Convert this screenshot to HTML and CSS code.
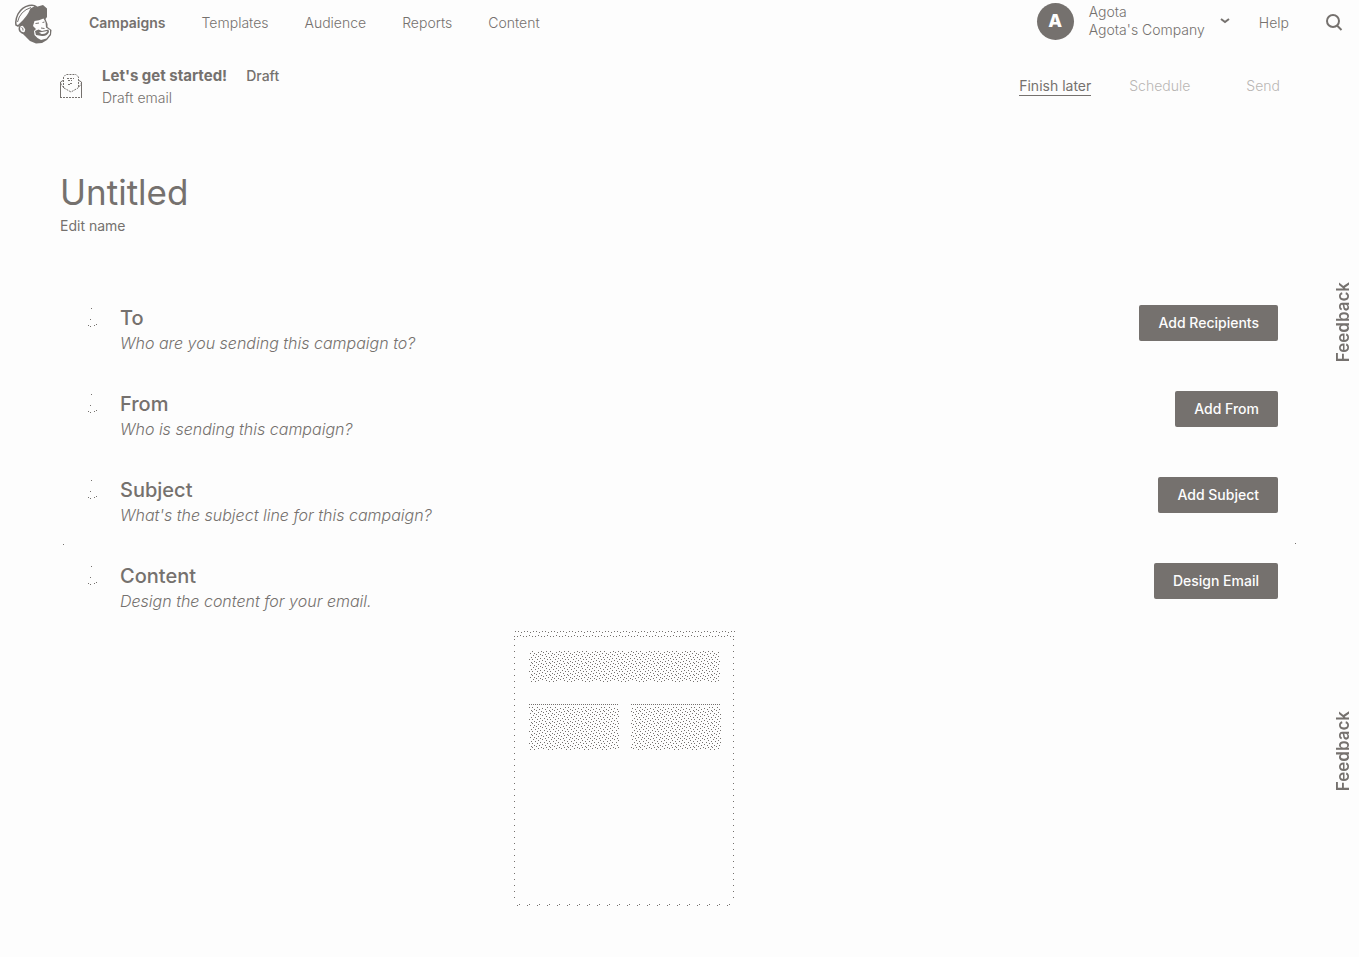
FILE: index.html
```html
<!DOCTYPE html>
<html lang="en">
<head>
<meta charset="utf-8">
<title>Untitled campaign</title>
<link rel="stylesheet" href="styles.css">
</head>
<body>
<header class="topbar">
  <a class="logo" href="#" aria-label="Home">
    <svg viewBox="15 4 38 40" width="38" height="40" aria-hidden="true">
      <path class="ink" d="M19 24 L26 18 L31 9 L36 7 L43 5 L47 8.500 L47 17 L45.500 19 L47.500 24 L47.500 27 L51.500 30 L51 35 L47 40 L42 43 L36 43.500 L30 41 L25 36 L22 33 Z"/>
      <path class="cap" d="M16 25 Q15 20 18 14 Q22 7 29 5.500 Q34 4.500 36 6.500 L31 9 Q28 17 20 24 L18 26 Z"/>
      <path class="line" d="M17.500 22 Q20 11 31 7.500"/>
      <path class="ear" d="M20 26 Q23 23.500 24.500 27 Q27 29 25.500 31.500 Q24.500 34 21.500 32.500 Q18 30 20 26 Z"/>
      <path class="line" d="M21.500 27.500 Q23.500 28 23 30.500"/>
      <path class="paper" d="M34.500 21 Q39 20.500 43.500 18.500 L45.500 22 L46 27.500 L50 30 L50 34 L46.500 38.500 L41 40 L37.500 38 L34.500 35 L34 31 L36 29 L33 26 Z"/>
      <path class="ink" d="M35 31 L38.500 29.500 L42 31 L48.500 29.500 L49 32 Q47 36.500 42 36 L36 35 Z"/>
      <path class="smile" d="M39 32.500 L47.500 31 Q46 34.500 41.500 34 Z"/>
      <path class="line" d="M35.500 23.500 L39 23 M42.500 22.500 L44.500 22 M41 28 L44.500 28.500"/>
    </svg>
  </a>
  <nav class="nav">
    <a class="current" href="#">Campaigns</a>
    <a href="#">Templates</a>
    <a href="#">Audience</a>
    <a href="#">Reports</a>
    <a href="#">Content</a>
  </nav>
  <div class="tools">
    <button class="account" type="button">
      <span class="avatar">A</span>
      <span class="who"><span>Agota</span><span>Agota's Company</span></span>
      <svg viewBox="0 0 10 6" width="10" height="6" aria-hidden="true"><path class="chevron" d="M1 1 L5 4 L9 1"/></svg>
    </button>
    <a class="help" href="#">Help</a>
    <button class="search" type="button" aria-label="Search">
      <svg viewBox="0 0 18 18" width="18" height="18" aria-hidden="true"><circle class="glass" cx="8" cy="7" r="6"/><path class="glass" d="M12 11.500 L16.500 16"/></svg>
    </button>
  </div>
</header>
<section class="status">
  <svg class="envelope" viewBox="0 0 24 26" width="24" height="26" aria-hidden="true">
    <path class="dash" d="M4.500 15 V4 L7 1.500 H17 L19.500 4 V15"/>
    <path class="thin" d="M4 7.500 L1.500 9 V24 M20 7.500 L22.500 9 V24"/>
    <path class="dash" d="M1 24.500 H23 M1.500 10 Q3 13 5 15 L12 19 L19 15 Q21 13 22.500 10 M8 5.500 H15 M9 7.500 H13 M9 11.500 H11 M11 10.500 H13"/>
  </svg>
  <div class="status-text">
    <div class="status-line"><strong>Let's get started!</strong><span class="badge">Draft</span></div>
    <div class="kind">Draft email</div>
  </div>
  <div class="actions">
    <a class="later" href="#">Finish later</a>
    <button class="faint" type="button" disabled>Schedule</button>
    <button class="faint" type="button" disabled>Send</button>
  </div>
</section>
<main class="page">
  <h1>Untitled</h1>
  <a class="edit" href="#">Edit name</a>
  <div class="steps">
    <section class="step">
      <svg class="mark" viewBox="0 0 12 22" width="12" height="22" aria-hidden="true"><path d="M4 3h1v1h-1z M3 14h1v1h-1z M1 20h1v1h-1z M3 21h1v1h-1z M7 20h1v1h-1z M9 19h1v1h-1z"/></svg>
      <div class="body"><h2>To</h2><p>Who are you sending this campaign to?</p></div>
      <button class="primary" type="button">Add Recipients</button>
    </section>
    <section class="step">
      <svg class="mark" viewBox="0 0 12 22" width="12" height="22" aria-hidden="true"><path d="M4 3h1v1h-1z M3 14h1v1h-1z M1 20h1v1h-1z M3 21h1v1h-1z M7 20h1v1h-1z M9 19h1v1h-1z"/></svg>
      <div class="body"><h2>From</h2><p>Who is sending this campaign?</p></div>
      <button class="primary" type="button">Add From</button>
    </section>
    <section class="step">
      <svg class="mark" viewBox="0 0 12 22" width="12" height="22" aria-hidden="true"><path d="M4 3h1v1h-1z M3 14h1v1h-1z M1 20h1v1h-1z M3 21h1v1h-1z M7 20h1v1h-1z M9 19h1v1h-1z"/></svg>
      <div class="body"><h2>Subject</h2><p>What's the subject line for this campaign?</p></div>
      <button class="primary" type="button">Add Subject</button>
    </section>
    <section class="step divided">
      <svg class="mark" viewBox="0 0 12 22" width="12" height="22" aria-hidden="true"><path d="M4 3h1v1h-1z M3 14h1v1h-1z M1 20h1v1h-1z M3 21h1v1h-1z M7 20h1v1h-1z M9 19h1v1h-1z"/></svg>
      <div class="body">
        <h2>Content</h2><p>Design the content for your email.</p>
        <svg class="preview" viewBox="0 0 221 275" width="221" height="275" role="img" aria-label="Email layout">
          <defs>
            <pattern id="grain" width="18" height="12" patternUnits="userSpaceOnUse">
              <path d="M1 0h1v1h-1z M10 0h1v1h-1z M6 1h1v1h-1z M14 1h1v1h-1z M3 2h1v1h-1z M17 2h1v1h-1z M8 3h1v1h-1z M12 3h1v1h-1z M0 4h1v1h-1z M5 4h1v1h-1z M15 4h1v1h-1z M10 5h1v1h-1z M2 6h1v1h-1z M7 6h1v1h-1z M13 6h1v1h-1z M17 7h1v1h-1z M4 7h1v1h-1z M9 8h1v1h-1z M0 8h1v1h-1z M14 8h1v1h-1z M6 9h1v1h-1z M11 9h1v1h-1z M2 10h1v1h-1z M16 10h1v1h-1z M8 11h1v1h-1z M13 11h1v1h-1z M4 11h1v1h-1z"/>
            </pattern>
            <pattern id="edge" width="9" height="6" patternUnits="userSpaceOnUse">
              <path d="M1 0h1v1h-1z M4 0h1v1h-1z M7 1h1v1h-1z M0 5h1v1h-1z M3 5h1v1h-1z M6 4h1v1h-1z"/>
            </pattern>
          </defs>
          <rect width="221" height="6" fill="url(#edge)"/>
          <path class="side" d="M0.500 8 V272 M219.500 8 V272"/>
          <path class="bottom" d="M5 273.500 H217"/>
          <path class="bottom" d="M3 274.500 H217"/>
          <rect x="15" y="20" width="191" height="31" fill="url(#grain)"/>
          <rect x="15" y="76" width="90" height="43" fill="url(#grain)"/>
          <rect x="117" y="76" width="90" height="43" fill="url(#grain)"/>
          <path class="top" d="M15 73.500 H105 M117 73.500 H207"/>
        </svg>
      </div>
      <button class="primary" type="button">Design Email</button>
    </section>
  </div>
</main>
<button class="feedback upper" type="button">Feedback</button>
<button class="feedback lower" type="button">Feedback</button>
</body>
</html>
```
FILE: styles.css
```css
:root { --ink: #75716e; --paper: #fdfdfd; }
* { box-sizing: border-box; }
body { margin: 0; min-height: 100vh; background: var(--paper); color: var(--ink); font: 14px/18px Inter, "Liberation Sans", sans-serif; }
h1, h2, p { margin: 0; }
a { color: inherit; text-decoration: none; }
button { font: inherit; color: inherit; background: none; border: 0; padding: 0; cursor: pointer; }
svg { display: block; flex: none; fill: var(--ink); }
.topbar { display: flex; align-items: center; height: 46px; padding: 0 16px 0 15px; font-weight: 300; }
.logo { margin-top: 2px; }
.nav { display: flex; gap: 36px; margin-left: 36px; }
.nav .current { font-weight: 600; }
.tools { display: flex; align-items: center; margin-left: auto; }
.account { display: flex; align-items: center; gap: 15px; text-align: left; height: 42px; margin-bottom: 4px; font-weight: 300; }
.avatar { display: grid; place-items: center; width: 37px; height: 37px; border-radius: 50%; background: var(--ink); color: var(--paper); font-size: 18px; font-weight: 800; }
.who { display: grid; }
.help { margin: 0 36px 0 29px; }
.ink { fill: var(--ink); }
.paper, .smile { fill: var(--paper); }
.cap, .ear { fill: var(--paper); stroke: var(--ink); stroke-width: 1.5; }
.line { fill: none; stroke: var(--ink); stroke-width: 1; }
.chevron { fill: none; stroke: var(--ink); stroke-width: 2; }
.glass { fill: none; stroke: var(--ink); stroke-width: 2; }
.thin, .dash { fill: none; stroke: var(--ink); }
.dash { stroke-dasharray: 2 1; }
.status { display: flex; align-items: center; height: 80px; padding: 0 79px 0 59px; }
.status-text { margin: 2px 0 0 19px; }
.status-line { display: flex; gap: 19px; line-height: 22px; }
.status-line strong { font-size: 15px; font-weight: 700; }
.badge { font-weight: 500; }
.kind { font-weight: 300; line-height: 22px; }
.actions { display: flex; align-items: center; gap: 38px; margin-left: auto; }
.later { border-bottom: 1px solid var(--ink); }
.faint { color: #b9b6b4; font-weight: 300; }
.faint:last-child { margin-left: 18px; }
.page { padding: 42px 81px 0 60px; }
h1 { font-size: 35px; line-height: 48px; font-weight: 400; }
.edit { display: inline-block; margin-top: 1px; }
.steps { display: grid; gap: 36px; margin-top: 70px; }
.step { display: grid; grid-template-columns: 60px 1fr 150px; align-items: start; }
.divided { position: relative; }
.divided::before { content: ""; position: absolute; top: -19px; left: 3px; width: 1px; height: 1px; background: var(--ink); box-shadow: 1232px -1px var(--ink); }
.mark { margin-left: 27px; }
.body h2 { font-size: 20px; line-height: 26px; font-weight: 500; }
.body p { font-size: 16px; line-height: 24px; font-style: italic; font-weight: 300; }
.primary { justify-self: end; height: 36px; padding: 0 19px; border-radius: 2px; background: var(--ink); color: var(--paper); font-weight: 500; }
.preview { margin: 18px auto 0; }
.side { fill: none; stroke: var(--ink); stroke-dasharray: 1 5; }
.bottom { fill: none; stroke: var(--ink); stroke-dasharray: 1 9; }
.top { fill: none; stroke: var(--ink); stroke-dasharray: 1 1; }
.feedback { position: fixed; right: 6px; writing-mode: vertical-rl; transform: rotate(180deg); font-size: 17px; font-weight: 600; line-height: 20px; }
.upper { top: 282px; }
.lower { top: 711px; }
```
